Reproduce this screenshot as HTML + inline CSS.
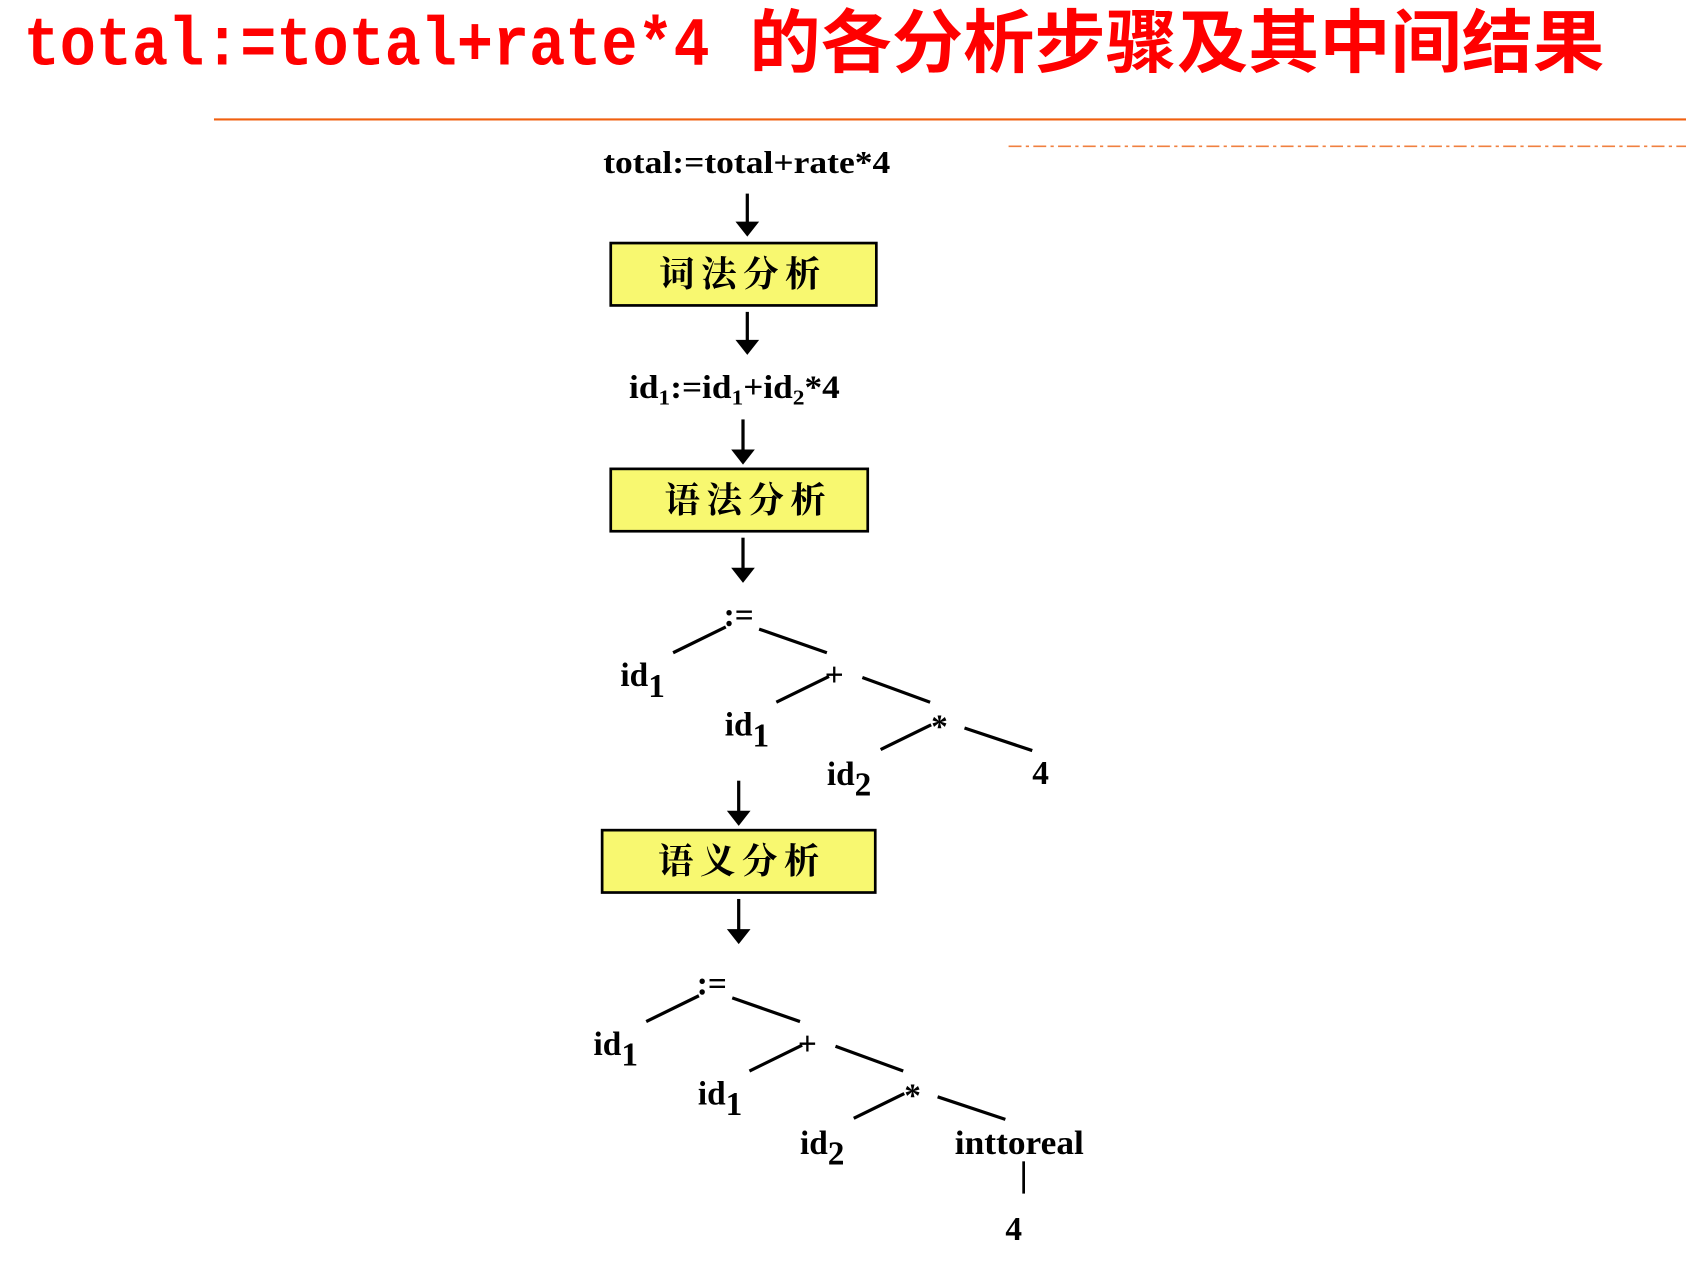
<!DOCTYPE html>
<html><head><meta charset="utf-8"><style>
html,body{margin:0;padding:0;background:#fff;width:1686px;height:1270px;overflow:hidden}
svg{display:block}
.t{font-family:"Liberation Serif","Noto Serif CJK SC",serif;font-weight:bold;fill:#000}
.c{font-family:"Liberation Serif","Noto Serif CJK SC",serif;font-weight:bold;fill:#000;font-size:31px}
</style></head><body>
<svg width="1686" height="1270" viewBox="0 0 1568 1181" xmlns="http://www.w3.org/2000/svg">
<text x="22" y="60" fill="#ff0000" font-family="Liberation Mono,monospace" font-weight="bold" font-size="64" textLength="638" lengthAdjust="spacingAndGlyphs">total:=total+rate*4</text>
<text x="697" y="62" fill="#ff0000" font-family="'Noto Sans CJK SC',sans-serif" font-weight="bold" font-size="64" textLength="795" lengthAdjust="spacingAndGlyphs">的各分析步骤及其中间结果</text>
<line x1="199" y1="111" x2="1568" y2="111" stroke="#f06010" stroke-width="2"/>
<line x1="938" y1="136" x2="1568" y2="136" stroke="#f08040" stroke-width="1.5" stroke-dasharray="12,4,3,4"/>
<g stroke="#000" stroke-width="3">
<line x1="695" y1="180" x2="695" y2="208"/><line x1="695" y1="290" x2="695" y2="318"/>
<line x1="691" y1="390" x2="691" y2="420"/><line x1="691" y1="500" x2="691" y2="530"/>
<line x1="687" y1="726" x2="687" y2="756"/><line x1="687" y1="836" x2="687" y2="866"/>
</g>
<g fill="#000">
<path d="M684,206 L706,206 L695,220 Z"/><path d="M684,316 L706,316 L695,330 Z"/>
<path d="M680,418 L702,418 L691,432 Z"/><path d="M680,528 L702,528 L691,542 Z"/>
<path d="M676,754 L698,754 L687,768 Z"/><path d="M676,864 L698,864 L687,878 Z"/>
</g>
<text class="t" x="561" y="161" font-size="29" textLength="267" lengthAdjust="spacingAndGlyphs">total:=total+rate*4</text>
<rect x="568" y="226" width="247" height="58" fill="#f8f870" stroke="#000" stroke-width="2.5"/>
<text class="t" x="613" y="266" font-size="33" textLength="150" lengthAdjust="spacing">词法分析</text>
<text class="t" x="585" y="370" font-size="30" textLength="196" lengthAdjust="spacingAndGlyphs">id<tspan font-size="20" dy="6">1</tspan><tspan dy="-6">:=id</tspan><tspan font-size="20" dy="6">1</tspan><tspan dy="-6">+id</tspan><tspan font-size="20" dy="6">2</tspan><tspan dy="-6">*4</tspan></text>
<rect x="568" y="436" width="239" height="58" fill="#f8f870" stroke="#000" stroke-width="2.5"/>
<text class="t" x="618" y="476" font-size="33" textLength="150" lengthAdjust="spacing">语法分析</text>
<rect x="560" y="772" width="254" height="58" fill="#f8f870" stroke="#000" stroke-width="2.5"/>
<text class="t" x="612" y="812" font-size="33" textLength="150" lengthAdjust="spacing">语义分析</text>
<g>
<g stroke="#000" stroke-width="3">
<line x1="626" y1="607" x2="675" y2="583"/><line x1="706" y1="585" x2="769" y2="607"/>
<line x1="722" y1="653" x2="771" y2="629"/><line x1="802" y1="630" x2="865" y2="653"/>
<line x1="819" y1="697" x2="866" y2="674"/><line x1="897" y1="677" x2="960" y2="698"/>
</g>
<text class="c" x="673" y="582">:=</text>
<text class="c" x="577" y="638">id<tspan dy="10">1</tspan></text>
<text class="c" x="767" y="638">+</text>
<text class="c" x="674" y="684">id<tspan dy="10">1</tspan></text>
<text class="c" x="866" y="686">*</text>
<text class="c" x="769" y="730">id<tspan dy="10">2</tspan></text>
</g>
<text class="c" x="960" y="729">4</text>
<g transform="translate(-25,343)">
<g stroke="#000" stroke-width="3">
<line x1="626" y1="607" x2="675" y2="583"/><line x1="706" y1="585" x2="769" y2="607"/>
<line x1="722" y1="653" x2="771" y2="629"/><line x1="802" y1="630" x2="865" y2="653"/>
<line x1="819" y1="697" x2="866" y2="674"/><line x1="897" y1="677" x2="960" y2="698"/>
</g>
<text class="c" x="673" y="582">:=</text>
<text class="c" x="577" y="638">id<tspan dy="10">1</tspan></text>
<text class="c" x="767" y="638">+</text>
<text class="c" x="674" y="684">id<tspan dy="10">1</tspan></text>
<text class="c" x="866" y="686">*</text>
<text class="c" x="769" y="730">id<tspan dy="10">2</tspan></text>
</g>
<text class="c" x="888" y="1073" textLength="120" lengthAdjust="spacingAndGlyphs">inttoreal</text>
<line x1="952" y1="1080" x2="952" y2="1110" stroke="#000" stroke-width="2.5"/>
<text class="c" x="935" y="1153">4</text>
</svg>
</body></html>
